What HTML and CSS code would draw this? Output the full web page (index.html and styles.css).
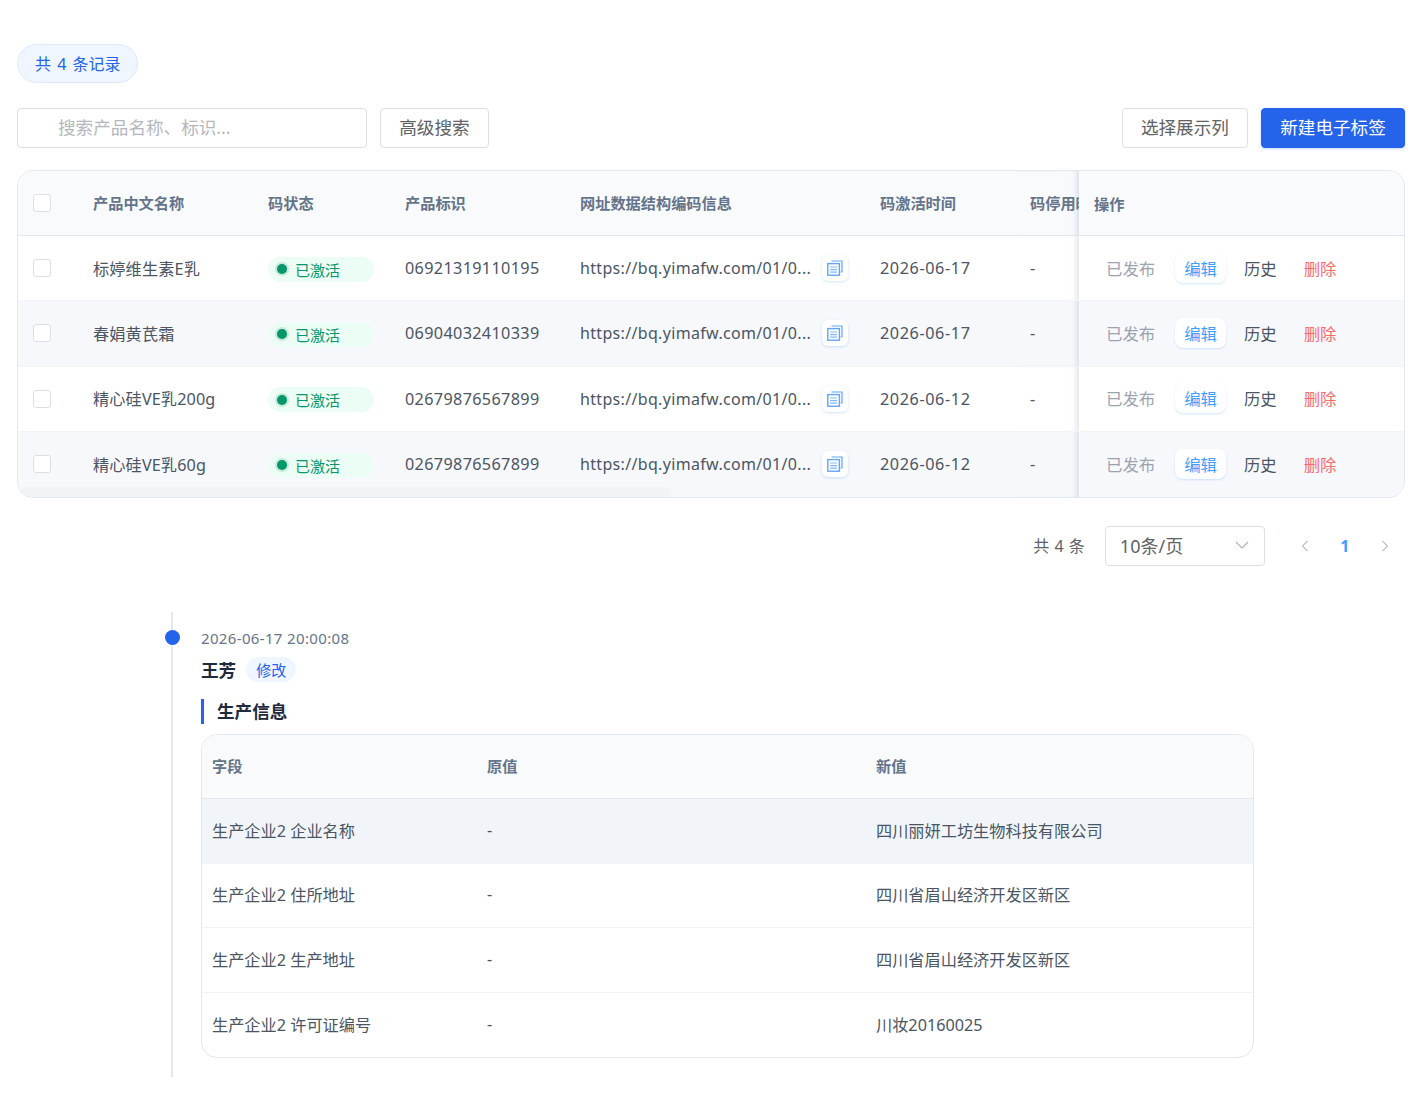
FILE: index.html
```html
<!DOCTYPE html>
<html>
<head>
  <meta charset="UTF-8">
  <title>电子标签</title>
  <link rel="stylesheet" href="styles.css">
</head>
<body>
  <svg class="icon-defs" width="0" height="0">
    <symbol id="copyIcon" viewBox="0 0 16 16">
      <path d="M4.5 1H15v11h-1.5" fill="none" stroke="currentColor" stroke-width="1.2"/>
      <rect x="0.8" y="3.6" width="11.6" height="11.6" fill="#fff" fill-opacity="0.6" stroke="currentColor" stroke-width="1.4"/>
      <path d="M3.2 7h6.8M3.2 9.6h6.8M3.2 12.2h6.8" fill="none" stroke="currentColor" stroke-width="1.2" opacity="0.8"/>
    </symbol>
  </svg>

  <!-- Record count -->
  <div class="count-pill">共 4 条记录</div>

  <!-- Toolbar -->
  <div class="toolbar">
    <input class="search-input" type="text" placeholder="搜索产品名称、标识...">
    <button class="btn">高级搜索</button>
    <div class="toolbar-right">
      <button class="btn">选择展示列</button>
      <button class="btn btn-primary">新建电子标签</button>
    </div>
  </div>

  <!-- Product table -->
  <div class="table-wrap">
    <table class="data-table">
      <colgroup>
        <col class="col-check"><col class="col-name"><col class="col-status"><col class="col-id">
        <col class="col-url"><col class="col-date"><col class="col-stop"><col class="col-ops">
      </colgroup>
      <thead>
        <tr>
          <th><input class="check" type="checkbox"></th>
          <th>产品中文名称</th>
          <th>码状态</th>
          <th>产品标识</th>
          <th>网址数据结构编码信息</th>
          <th>码激活时间</th>
          <th class="cell-stop">码停用时间</th>
          <th class="cell-ops">操作</th>
        </tr>
      </thead>
      <tbody>
        <tr>
          <td><input class="check" type="checkbox"></td>
          <td class="name">标婷维生素E乳</td>
          <td><span class="status"><i class="status-dot"></i>已激活</span></td>
          <td class="num">06921319110195</td>
          <td><div class="url-cell"><span class="num">https://bq.yimafw.com/01/0...</span><span class="copy-chip"><svg width="16" height="16"><use href="#copyIcon"/></svg></span></div></td>
          <td class="date">2026-06-17</td>
          <td class="cell-stop">-</td>
          <td class="cell-ops"><div class="ops"><span class="op-done">已发布</span><span class="op-edit">编辑</span><span class="op-history">历史</span><span class="op-delete">删除</span></div></td>
        </tr>
        <tr>
          <td><input class="check" type="checkbox"></td>
          <td class="name">春娟黄芪霜</td>
          <td><span class="status"><i class="status-dot"></i>已激活</span></td>
          <td class="num">06904032410339</td>
          <td><div class="url-cell"><span class="num">https://bq.yimafw.com/01/0...</span><span class="copy-chip"><svg width="16" height="16"><use href="#copyIcon"/></svg></span></div></td>
          <td class="date">2026-06-17</td>
          <td class="cell-stop">-</td>
          <td class="cell-ops"><div class="ops"><span class="op-done">已发布</span><span class="op-edit">编辑</span><span class="op-history">历史</span><span class="op-delete">删除</span></div></td>
        </tr>
        <tr>
          <td><input class="check" type="checkbox"></td>
          <td class="name">精心硅VE乳200g</td>
          <td><span class="status"><i class="status-dot"></i>已激活</span></td>
          <td class="num">02679876567899</td>
          <td><div class="url-cell"><span class="num">https://bq.yimafw.com/01/0...</span><span class="copy-chip"><svg width="16" height="16"><use href="#copyIcon"/></svg></span></div></td>
          <td class="date">2026-06-12</td>
          <td class="cell-stop">-</td>
          <td class="cell-ops"><div class="ops"><span class="op-done">已发布</span><span class="op-edit">编辑</span><span class="op-history">历史</span><span class="op-delete">删除</span></div></td>
        </tr>
        <tr>
          <td><input class="check" type="checkbox"></td>
          <td class="name">精心硅VE乳60g</td>
          <td><span class="status"><i class="status-dot"></i>已激活</span></td>
          <td class="num">02679876567899</td>
          <td><div class="url-cell"><span class="num">https://bq.yimafw.com/01/0...</span><span class="copy-chip"><svg width="16" height="16"><use href="#copyIcon"/></svg></span></div></td>
          <td class="date">2026-06-12</td>
          <td class="cell-stop">-</td>
          <td class="cell-ops"><div class="ops"><span class="op-done">已发布</span><span class="op-edit">编辑</span><span class="op-history">历史</span><span class="op-delete">删除</span></div></td>
        </tr>
      </tbody>
    </table>
    <div class="scroll-thumb"></div>
  </div>

  <!-- Pagination -->
  <div class="pager">
    <span class="pager-total">共 4 条</span>
    <div class="page-size">
      <span>10条/页</span>
      <svg width="16" height="16" viewBox="0 0 16 16"><path d="M2 5l6 6 6-6" fill="none" stroke="#a8b0bd" stroke-width="1.1"/></svg>
    </div>
    <div class="pages">
      <svg width="16" height="16" viewBox="0 0 16 16"><path d="M10.5 3l-5 5 5 5" fill="none" stroke="#b8bec8" stroke-width="1.1"/></svg>
      <span class="page-current">1</span>
      <svg width="16" height="16" viewBox="0 0 16 16"><path d="M5.5 3l5 5-5 5" fill="none" stroke="#b8bec8" stroke-width="1.1"/></svg>
    </div>
  </div>

  <!-- Change history -->
  <div class="timeline">
    <span class="timeline-dot"></span>
    <div class="log-time">2026-06-17 20:00:08</div>
    <div class="log-user"><strong>王芳</strong><span class="log-tag">修改</span></div>
    <h3 class="log-section">生产信息</h3>
    <div class="log-table-wrap">
      <table class="log-table">
        <colgroup><col class="log-col-field"><col class="log-col-old"><col></colgroup>
        <thead>
          <tr><th>字段</th><th>原值</th><th>新值</th></tr>
        </thead>
        <tbody>
          <tr class="row-active"><td>生产企业2 企业名称</td><td>-</td><td>四川丽妍工坊生物科技有限公司</td></tr>
          <tr><td>生产企业2 住所地址</td><td>-</td><td>四川省眉山经济开发区新区</td></tr>
          <tr><td>生产企业2 生产地址</td><td>-</td><td>四川省眉山经济开发区新区</td></tr>
          <tr><td>生产企业2 许可证编号</td><td>-</td><td>川妆20160025</td></tr>
        </tbody>
      </table>
    </div>
  </div>
</body>
</html>
```

FILE: styles.css
```css
/* Global Styles */
* {
  box-sizing: border-box;
}
body {
  margin: 0;
  padding: 44px 15px 0 17px;
  font-family: "Noto Sans", "Noto Sans CJK SC", sans-serif;
  font-size: 16px;
  color: #4b5563;
  background: #fff;
}
.icon-defs {
  position: absolute;
}
/* Record count */
.count-pill {
  display: inline-flex;
  align-items: center;
  height: 39px;
  padding: 0 17px 2px;
  border: 1px solid #dbeafe;
  border-radius: 20px;
  background: #eff6ff;
  color: #2563eb;
  font-size: 16px;
  word-spacing: 2px;
  vertical-align: top;
}
/* Toolbar */
.toolbar {
  display: flex;
  align-items: center;
  gap: 13px;
  margin-top: 25px;
}
.toolbar-right {
  display: flex;
  gap: 13px;
  margin-left: auto;
}
.search-input {
  width: 350px;
  height: 40px;
  padding: 0 12px 3px 40px;
  border: 1px solid #dcdfe6;
  border-radius: 4px;
  font-family: inherit;
  font-size: 17.6px;
  color: #4b5563;
}
.search-input::placeholder {
  color: #b4b7bd;
}
.btn {
  height: 40px;
  padding: 0 18.2px 4px;
  border: 1px solid #dcdfe6;
  border-radius: 4px;
  background: #fff;
  color: #606266;
  font-family: inherit;
  font-size: 17.6px;
  cursor: pointer;
}
.btn-primary {
  border-color: #2563eb;
  background: #2563eb;
  color: #fff;
  box-shadow: 0 1px 3px rgba(37, 99, 235, 0.25);
}
/* Product table */
.table-wrap {
  position: relative;
  margin-top: 22px;
  border: 1px solid #e2e8f0;
  border-radius: 16px;
  overflow: hidden;
}
.data-table,
.log-table {
  width: 100%;
  table-layout: fixed;
  border-collapse: separate;
  border-spacing: 0;
}
.col-check { width: 63px; }
.col-name { width: 175px; }
.col-status { width: 137px; }
.col-id { width: 175px; }
.col-url { width: 300px; }
.col-date { width: 150px; }
.col-stop { width: 61px; }
.data-table th,
.log-table th {
  height: 65px;
  padding: 0 12px 3px;
  background: #f8fafc;
  border-bottom: 1px solid #e2e8f0;
  color: #64748b;
  font-size: 15.2px;
  font-weight: 700;
  text-align: left;
  white-space: nowrap;
  overflow: hidden;
}
.data-table td {
  height: 65.25px;
  padding: 0 12px;
  border-bottom: 1px solid #f1f5f9;
  font-size: 16.2px;
  white-space: nowrap;
}
.data-table tbody tr:nth-child(even) td {
  background: #f7f8fc;
}
.data-table tbody tr:last-child td {
  border-bottom: 0;
}
.data-table th:first-child,
.data-table td:first-child {
  padding: 0 0 0 15px;
}
.data-table .cell-stop {
  padding-right: 0;
  overflow: hidden;
  box-shadow: inset -7px 0 6px -5px rgba(100, 116, 139, 0.22);
}
.data-table .cell-ops {
  padding: 0 15px;
}
.data-table .name {
  padding-bottom: 1px;
  letter-spacing: 0.12px;
}
.num {
  font-size: 16px;
  letter-spacing: 0.35px;
}
.date {
  letter-spacing: 0.6px;
}
.check {
  appearance: none;
  display: block;
  width: 18px;
  height: 18px;
  margin: 0;
  border: 1px solid #dcdfe6;
  border-radius: 3px;
  background: #fff;
}
/* Status tag */
.status {
  display: inline-flex;
  align-items: center;
  width: 106px;
  height: 25px;
  margin-top: 2px;
  padding-left: 9px;
  border-radius: 13px;
  background: #ecfdf5;
  color: #059669;
  font-size: 15px;
  vertical-align: middle;
}
.status-dot {
  width: 10px;
  height: 10px;
  margin-right: 8px;
  border-radius: 50%;
  background: #059669;
  box-shadow: 0 0 0 2px #c6eadb;
}
/* URL cell */
.url-cell {
  display: flex;
  align-items: center;
  gap: 11px;
}
.url-cell .num {
  letter-spacing: 0.33px;
}
.copy-chip {
  display: flex;
  align-items: center;
  justify-content: center;
  width: 26px;
  height: 26px;
  border-radius: 6px;
  background: #fff;
  color: #60a5fa;
  box-shadow: 0 1px 3px rgba(96, 165, 250, 0.3);
}
/* Row actions */
.ops {
  display: flex;
  align-items: center;
  padding: 0 0 1px 12px;
  font-size: 16.4px;
}
.op-done {
  color: #9ca3af;
}
.op-edit {
  margin-left: 20px;
  padding: 3px 9px;
  border-radius: 8px;
  background: #fff;
  color: #409eff;
  box-shadow: 0 1px 2px rgba(64, 158, 255, 0.25);
}
.op-history {
  margin-left: 18px;
  color: #4b5563;
}
.op-delete {
  margin-left: 27px;
  color: #f56c6c;
}
.scroll-thumb {
  position: absolute;
  left: 3px;
  bottom: 0;
  width: 650px;
  height: 10px;
  border-radius: 5px;
  background: rgba(100, 116, 139, 0.04);
}
/* Pagination */
.pager {
  display: flex;
  align-items: center;
  justify-content: flex-end;
  margin-top: 28px;
}
.pager-total {
  padding-bottom: 2px;
  color: #606266;
  word-spacing: 1px;
}
.page-size {
  display: flex;
  align-items: center;
  justify-content: space-between;
  width: 160px;
  height: 40px;
  margin-left: 20px;
  padding: 0 14px 2px;
  border: 1px solid #dcdfe6;
  border-radius: 4px;
  color: #606266;
  font-size: 18px;
}
.pages {
  display: flex;
  align-items: center;
  gap: 27.5px;
  margin-left: 32px;
  padding-right: 12px;
}
.page-current {
  color: #409eff;
  font-weight: 700;
}
/* Change history */
.timeline {
  position: relative;
  width: 1083px;
  margin: 46px 0 0 154px;
  padding: 16px 0 19px 28px;
  border-left: 2px solid #e2e8f0;
}
.timeline-dot {
  position: absolute;
  left: -8.5px;
  top: 18px;
  width: 15px;
  height: 15px;
  border-radius: 50%;
  background: #2563eb;
}
.log-time {
  color: #64748b;
  font-size: 15px;
  letter-spacing: 0.35px;
  line-height: 20px;
}
.log-user {
  display: flex;
  align-items: center;
  gap: 10px;
  margin-top: 9px;
}
.log-user strong {
  color: #1e293b;
  font-size: 17.6px;
}
.log-tag {
  padding: 2px 10px;
  border-radius: 14px;
  background: #eff6ff;
  color: #2563eb;
  font-size: 15px;
}
.log-section {
  margin: 17px 0 10px;
  padding-left: 13px;
  border-left: 3px solid #2563eb;
  color: #1e293b;
  font-size: 17.6px;
  line-height: 25px;
}
.log-table-wrap {
  border: 1px solid #e2e8f0;
  border-radius: 16px;
  overflow: hidden;
}
.log-col-field { width: 275px; }
.log-col-old { width: 389px; }
.log-table th {
  height: 64px;
  padding: 0 10px 3px;
}
.log-table td {
  height: 64.5px;
  padding: 0 10px 2px;
  border-bottom: 1px solid #f1f5f9;
  font-size: 16.2px;
}
.log-table tbody tr:last-child td {
  border-bottom: 0;
}
.row-active td {
  background: #f1f5f9;
}
```
